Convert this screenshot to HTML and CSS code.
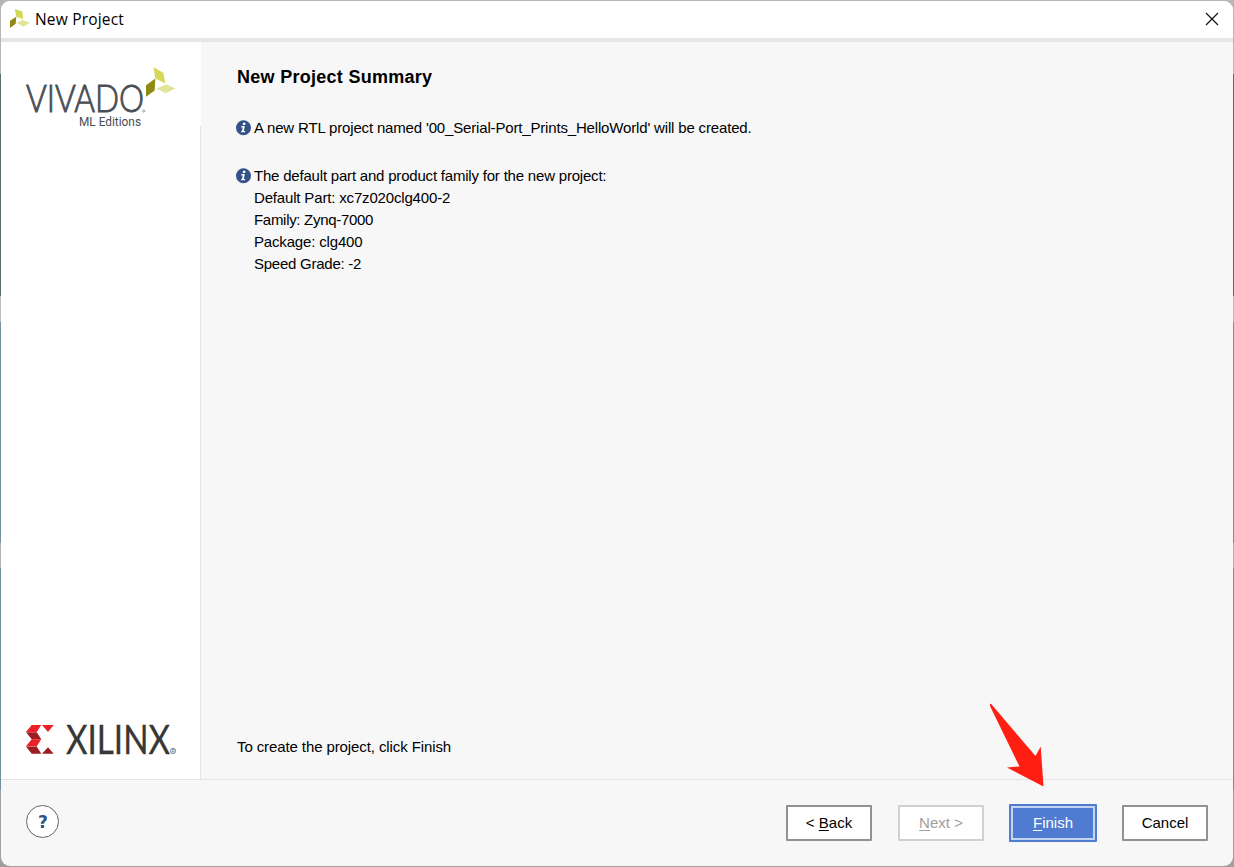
FILE: index.html
```html
<!DOCTYPE html>
<html lang="en">
<head>
<meta charset="utf-8">
<title>New Project</title>
<link rel="stylesheet" href="styles.css">
</head>
<body>
<div class="desktop">
<main class="window">
  <header class="titlebar">
    <svg class="app-icon" width="20" height="20" viewBox="0 0 20 20"><path fill="#d3d856" d="M4.700 0l7.600 2.600.8 7.600-6.700-2.500z"/><path fill="#8e8a13" d="M0 11.700l6.300-4-.6 7L0 19z"/><path fill="#e3e499" d="M6.700 13.700l6-2.700 7.300 2.700-6.700 4z"/></svg>
    <h1 class="window-title">New Project</h1>
    <svg class="close" width="14" height="14" viewBox="0 0 14 14"><path d="M1 1l12 12M13 1L1 13" stroke="#111" stroke-width="1.2"/></svg>
  </header>
  <div class="content">
    <aside class="sidebar">
      <svg class="logo" width="152" height="61" viewBox="0 0 152 61">
        <path fill="#d3d856" d="M127.500.3l9.800 5.400 2 10.600-10-4.700z"/><path fill="#8e8a13" d="M120 18.300l9.300-6.800-.6 12-8.700 6.200z"/><path fill="#e3e499" d="M130.500 21.500l10-4.200 9 4.200-10.100 4.800z"/>
        <text class="vivado-name" x="0" y="45.300" textLength="118" lengthAdjust="spacingAndGlyphs">VIVADO</text>
        <circle cx="117.700" cy="44" r="1.100" fill="none" stroke="#888" stroke-width=".8"/>
        <text class="edition" x="53" y="59.300" textLength="62" lengthAdjust="spacingAndGlyphs">ML Editions</text>
      </svg>
      <svg class="logo" width="152" height="32" viewBox="0 0 152 32">
        <path fill="#ed2025" d="M5.700 1h9.600l-4.600 7H0zM16 1h11.700L22 8zM5.700 15.300h9.600l-4.600 7H0z"/>
        <path fill="#9f1c24" d="M0 8.300h10.700l4.600 7H5.700zM0 22.600h10.700l4.600 7.100H5.700zM22 23.200l5.700 6.500H16z"/>
        <text class="xilinx-name" x="40" y="29.600" textLength="104" lengthAdjust="spacingAndGlyphs">XILINX</text>
        <circle cx="147" cy="27" r="2.700" fill="none" stroke="#666" stroke-width=".7"/>
        <text class="registered" x="145.600" y="28.700">R</text>
      </svg>
    </aside>
    <section class="summary">
      <h2 class="heading">New Project Summary</h2>
      <div class="info">
        <svg class="info-icon" width="16" height="16" viewBox="0 0 16 16"><circle cx="8.500" cy="7.700" r="7.500" fill="#335288"/><path d="M8.100 2.800h2.400l-.4 2.100H7.700zM6.500 6h3.300l-1 4.900h1.400l-.3 1.400H6l.3-1.400h.7l.7-3.500H6.200z" fill="#fff"/></svg>
        <p class="info-text">A new RTL project named '00_Serial-Port_Prints_HelloWorld' will be created.</p>
      </div>
      <div class="info">
        <svg class="info-icon" width="16" height="16" viewBox="0 0 16 16"><circle cx="8.500" cy="7.700" r="7.500" fill="#335288"/><path d="M8.100 2.800h2.400l-.4 2.100H7.700zM6.500 6h3.300l-1 4.900h1.400l-.3 1.400H6l.3-1.400h.7l.7-3.500H6.200z" fill="#fff"/></svg>
        <div class="info-text"><p class="intro">The default part and product family for the new project:</p><p>Default Part: xc7z020clg400-2</p><p class="family">Family: Zynq-7000</p><p>Package: clg400</p><p class="speed">Speed Grade: -2</p></div>
      </div>
      <p class="hint">To create the project, click Finish</p>
    </section>
  </div>
  <footer class="footer">
    <button class="help">?</button>
    <button class="button">&lt; <u>B</u>ack</button>
    <button class="button disabled"><u>N</u>ext &gt;</button>
    <button class="button primary"><u>F</u>inish</button>
    <button class="button">Cancel</button>
  </footer>
</main>
<svg class="arrow" width="56" height="84" viewBox="0 0 56 84"><path fill="#ff1e12" d="M1 1Q2 0 3 2L46.500 53 51.700 43.500 54.500 83.500 18 64.500 30.500 63.500 1 3Z"/></svg>
</div>
</body>
</html>
```
FILE: styles.css
```css
* { box-sizing: border-box; }
body, h1, h2, p { margin: 0; }
body { font-family: "Liberation Sans", Arial, sans-serif; font-size: 15px; color: #000; }
.desktop { position: relative; width: 1234px; height: 867px; padding: 1px; background: linear-gradient(#b7b7b7 0 74px, #58706f 74px 296px, #b9bec0 296px 322px, #7292a1 322px 543px, #b0b4b6 543px 568px, #7292a1 568px 790px, #a0a0a0 790px); overflow: hidden; }
.window { height: 865px; display: flex; flex-direction: column; overflow: hidden; border-radius: 9px; background: #f7f7f7; }
.titlebar { height: 41px; display: flex; align-items: center; padding: 0 14px 1px 9px; border-bottom: 4px solid #e6e6e6; background: #fff; }
.window-title { flex: 1; margin-left: 5px; font: 400 15.500px "Open Sans", "Noto Sans", sans-serif; letter-spacing: .18px; }
.content { height: 738px; display: flex; border-bottom: 1px solid #e3e3e3; }
.sidebar { width: 200px; display: flex; flex-direction: column; justify-content: space-between; padding: 25px 0 23px 25px; border-right: 1px solid #e5e5e5; border-image: linear-gradient(#fff 0 85px, #e5e5e5 85px) 1; background: #fff; }
.logo { overflow: visible; }
.vivado-name { font: 300 37px Lato, sans-serif; fill: #4a4d54; stroke: #4a4d54; stroke-width: .9px; }
.edition { font: 400 12px Roboto, sans-serif; fill: #4a4d54; }
.xilinx-name { font: 400 40px Lato, sans-serif; fill: #373735; stroke: #373735; stroke-width: .3px; }
.registered { font: 4.500px "Liberation Sans", sans-serif; fill: #555; }
.summary { flex: 1; display: flex; flex-direction: column; padding: 24px 36px 21px; }
.heading { margin-bottom: 29px; font-size: 18px; line-height: 22px; letter-spacing: .28px; }
.info { display: flex; margin-bottom: 26px; line-height: 22px; letter-spacing: -.165px; }
.intro { letter-spacing: -.2px; }
.family { letter-spacing: -.3px; }
.speed { letter-spacing: -.25px; }
.info-icon { flex: none; margin: 3px 2px 0 -2px; }
.info-text { margin-left: 1px; }
.hint { margin-top: auto; line-height: 22px; letter-spacing: -.1px; }
.footer { flex: 1; display: flex; align-items: center; gap: 26px; padding: 0 25px; }
.help { width: 33px; height: 33px; margin: 0 auto 3px 0; padding: 1px 0 0 1px; border: 1px solid #666; border-radius: 50%; background: #fff; color: #315087; font: bold 17px "DejaVu Sans", sans-serif; }
.button { width: 86px; height: 36px; padding: 0 0 2px; border: 2px solid #929292; border-radius: 1px; background: #fff; color: #000; font: 15px "Liberation Sans", sans-serif; }
.button.disabled { border-color: #d0d0d0; color: #a0a0a0; }
.button.primary { width: 88px; height: 38px; margin: 0 -1px; border: 2px solid #4f7bd1; outline: 2px solid #c3d4f1; outline-offset: -4px; background: #4f7bd1; color: #fff; }
u { text-decoration-thickness: 1px; text-underline-offset: 2px; }
.arrow { position: absolute; left: 989px; top: 703px; }
```
